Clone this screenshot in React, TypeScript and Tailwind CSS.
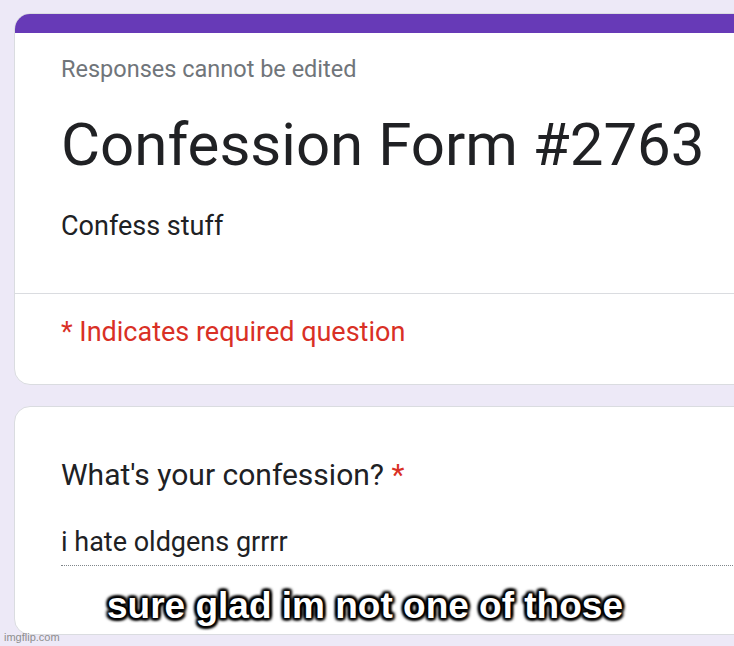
const captionShadow =
  "[text-shadow:2px_2px_3px_#000,-2px_-2px_3px_#000,2px_-2px_3px_#000,-2px_2px_3px_#000,0_2px_3px_#000,0_-2px_3px_#000,2px_0_3px_#000,-2px_0_3px_#000]"

const App = () => {
  return (
    <div className="relative h-[646px] w-[734px] overflow-hidden bg-[#ede9f7] font-['Roboto',sans-serif]">
      <div className="flex flex-col gap-[21px] pt-[13px] pl-[14px]">
        {/* header card */}
        <div className="w-[800px] overflow-hidden rounded-[16px] border border-[#dadce0] bg-white">
          <div className="h-[19px] bg-[#673ab7]" />
          <div className="px-[46px] pt-[21px] pb-[49px]">
            <p className="text-[23.5px] leading-[30px] text-[#70757a]">Responses cannot be edited</p>
            <h1 className="mt-[25px] text-[60px] leading-[72px] text-[#202124]">Confession Form #2763</h1>
            <p className="mt-[27px] text-[27px] leading-[36px] text-[#202124]">Confess stuff</p>
          </div>
          <div className="border-t border-[#dadce0] px-[46px] pt-[20px] pb-[34px]">
            <p className="text-[27px] leading-[36px] text-[#d93025]">* Indicates required question</p>
          </div>
        </div>

        {/* question card */}
        <div className="w-[800px] rounded-[16px] border border-[#dadce0] bg-white pt-[49px] pb-[68px] pl-[46px]">
          <p className="text-[30px] leading-[38px] text-[#202124]">
            What's your confession? <span className="text-[#d93025]">*</span>
          </p>
          <div className="mt-[31px] border-b border-dotted border-[#80868b] pb-[6px] text-[27px] leading-[34px] text-[#202124]">
            i hate oldgens grrrr
          </div>
        </div>
      </div>

      <p
        className={`absolute top-[584px] left-[107px] font-['Liberation_Sans',Arial,sans-serif] text-[37px] leading-[44px] font-bold text-white ${captionShadow}`}
      >
        sure glad im not one of those
      </p>

      <p className="absolute bottom-[2px] left-[4px] font-['Liberation_Sans',Arial,sans-serif] text-[11px] leading-[13px] text-[#8e8e8e]">
        imgflip.com
      </p>
    </div>
  )
}

export default App
